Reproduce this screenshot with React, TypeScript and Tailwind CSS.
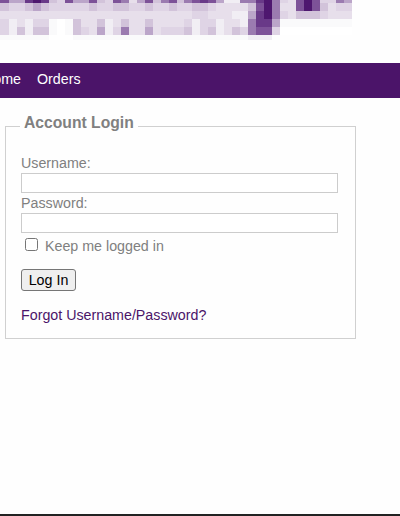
import React from 'react';

const shades: Record<string, string> = {
  '0': '#ffffff',
  '1': '#fafafb',
  '2': '#f1eef4',
  '3': '#e7dfeb',
  '4': '#dfd4e5',
  '5': '#d2c3da',
  '6': '#bba5c9',
  '7': '#9b7bb0',
  '8': '#7d5298',
  '9': '#693988',
  A: '#4e176f',
};

// one character per tile, 8px tiles
const logoRows = [
  { y: 0, h: 3, tiles: '8669A9548668548736857857898622779A7438A84476' },
  { y: 3, h: 8, tiles: '544565444445445544544544554333358A7338A85344' },
  { y: 11, h: 8, tiles: '333333333333333333333333443332269A7435554333' },
  { y: 19, h: 8, tiles: '42324410153352353353333424423327996111111111' },
  { y: 27, h: 8, tiles: '42525510154362473363444524523547884000000000' },
  { y: 35, h: 5, tiles: '1111110001111111111111111111111222' },
];

const tileX = (i: number) => (i === 0 ? 0 : Math.round(9 + (i - 1) * 7.977));

const Logo: React.FC = () => (
  <svg width="400" height="40" className="block" shapeRendering="crispEdges">
    {logoRows.map((row) =>
      row.tiles.split('').map((tile, i) => (
        <rect
          key={`${row.y}-${i}`}
          x={tileX(i)}
          y={row.y}
          width={tileX(i + 1) - tileX(i)}
          height={row.h}
          fill={shades[tile]}
        />
      ))
    )}
  </svg>
);

const NavBar: React.FC = () => (
  <nav className="flex h-[35px] items-center gap-4 overflow-hidden bg-[#4b1469] pb-[2px] text-white">
    <a href="#" className="-ml-[17px]">Home</a>
    <a href="#">Orders</a>
  </nav>
);

const LoginForm: React.FC = () => (
  <fieldset className="ml-[5px] mt-[17px] h-[224px] w-[351px] border border-[#d0d0d0] px-[15px] text-[#808080]">
    <legend className="ml-[-1px] h-[22px] px-1 text-[15.7px] leading-[16px] font-bold">Account Login</legend>
    <label className="mt-[16px] block h-[20px] leading-[20px]" htmlFor="username">Username:</label>
    <input id="username" type="text" className="block h-[20px] w-[317px] border border-[#cccccc] bg-white px-1 outline-none" />
    <label className="block h-[20px] leading-[20px]" htmlFor="password">Password:</label>
    <input id="password" type="password" className="block h-[20px] w-[317px] border border-[#cccccc] bg-white px-1 outline-none" />
    <label className="mt-[3px] flex h-[20px] items-center gap-[7px] pl-1">
      <input type="checkbox" className="-mt-[3px] h-[13px] w-[13px] appearance-none rounded-[2.5px] border border-[#767676] bg-white" />
      <span className="pt-[2px]">Keep me logged in</span>
    </label>
    <button type="button" className="mt-[13px] block h-[22px] w-[55px] rounded-[3px] border border-[#767676] bg-[#efefef] leading-[20px] text-black">
      Log In
    </button>
    <a href="#" className="mt-[14px] block leading-[20px] text-[#4b1469]">Forgot Username/Password?</a>
  </fieldset>
);

export default function App() {
  return (
    <div className="flex h-[516px] w-[400px] flex-col overflow-hidden border-b-2 border-[#222222] bg-[#fefefe] font-['Liberation_Sans',Arial,sans-serif] text-[14.25px]">
      <header className="h-[63px]">
        <Logo />
      </header>
      <NavBar />
      <main>
        <LoginForm />
      </main>
    </div>
  );
}
